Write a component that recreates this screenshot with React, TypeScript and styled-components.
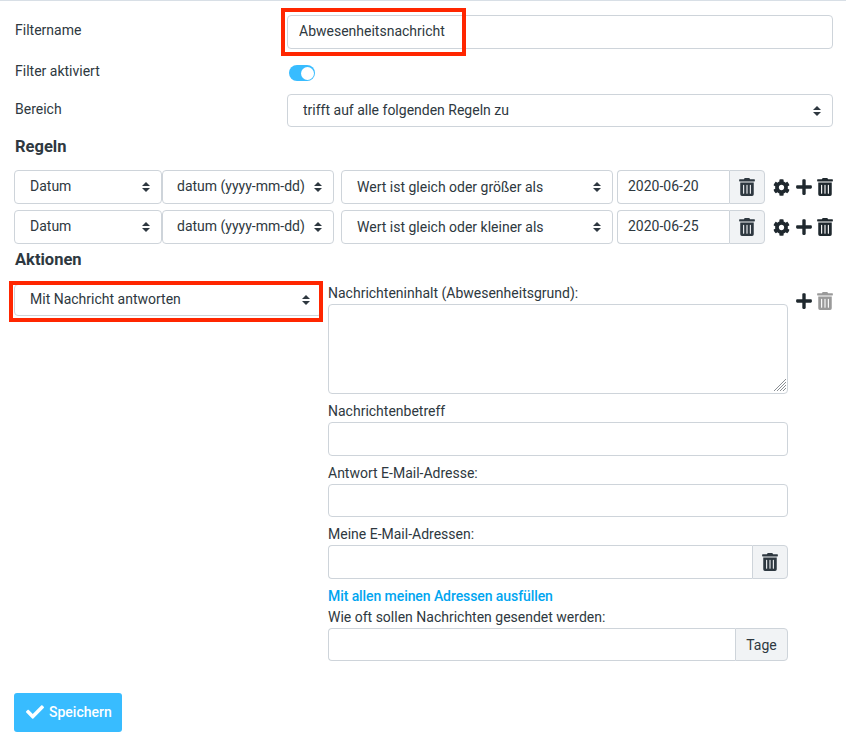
import React from "react";
import styled, { createGlobalStyle } from "styled-components";
import { FaCheck, FaCog, FaPlus, FaTrashAlt } from "react-icons/fa";

const GlobalStyle = createGlobalStyle`
  html, body {
    margin: 0;
    background: #fff;
  }
  * {
    box-sizing: border-box;
  }
`;

const Page = styled.div`
  width: 846px;
  height: 742px;
  border-top: 1px solid #d8dfe6;
  padding: 14px 13px 0 14px;
  font-family: Roboto, "Liberation Sans", sans-serif;
  font-size: 14px;
  color: #2e3840;
`;

const FormRow = styled.div<{ $height: number }>`
  display: grid;
  grid-template-columns: 273px 1fr;
  height: ${(p) => p.$height}px;
`;

const RowLabel = styled.div<{ $top?: number }>`
  padding: ${(p) => p.$top ?? 7}px 0 0 1px;
  line-height: 17px;
`;

const Field = styled.div`
  position: relative;
`;

const Highlight = styled.div<{ $left: number; $top: number; $width: number; $height: number }>`
  position: absolute;
  left: ${(p) => p.$left}px;
  top: ${(p) => p.$top}px;
  width: ${(p) => p.$width}px;
  height: ${(p) => p.$height}px;
  border: 4px solid #ff2600;
  pointer-events: none;
`;

const Input = styled.input<{ $height?: number; $pad?: number }>`
  display: block;
  width: 100%;
  min-width: 0;
  height: ${(p) => p.$height ?? 34}px;
  border: 1px solid #ced4da;
  border-radius: 4px;
  padding: 0 ${(p) => p.$pad ?? 11}px 2px;
  font: inherit;
  color: inherit;
  background: #fff;
  outline: none;
`;

const SelectBox = styled.div<{ $width?: number; $height?: number; $gap?: number }>`
  position: relative;
  flex: none;
  width: ${(p) => (p.$width ? `${p.$width}px` : "100%")};
  height: ${(p) => p.$height ?? 34}px;
  margin-left: ${(p) => p.$gap ?? 0}px;
`;

const NativeSelect = styled.select<{ $pad?: number; $low?: boolean }>`
  display: block;
  width: 100%;
  height: 100%;
  appearance: none;
  border: 1px solid #ced4da;
  border-radius: 4px;
  padding: 0 24px ${(p) => (p.$low ? 0 : 2)}px ${(p) => p.$pad ?? 15}px;
  font: inherit;
  color: inherit;
  background: #fff;
  outline: none;
`;

const Arrows = styled.svg`
  position: absolute;
  right: 12px;
  top: 50%;
  width: 8px;
  height: 10px;
  margin-top: -5px;
  pointer-events: none;
`;

const Toggle = styled.div`
  position: relative;
  width: 26px;
  height: 16px;
  margin: 3px 0 0 2px;
  border-radius: 8px;
  background: #38bcff;
`;

const Knob = styled.span`
  position: absolute;
  right: 1px;
  top: 1.5px;
  width: 13px;
  height: 13px;
  border-radius: 50%;
  background: #fff;
`;

const Heading = styled.h3`
  margin: 0;
  padding-left: 1px;
  font-size: 16.5px;
  font-weight: 700;
  line-height: 20px;
`;

const RulesHeading = styled(Heading)`
  margin: 10px 0 13px;
`;

const ActionsHeading = styled(Heading)`
  margin: 5px 0 14px;
`;

const RuleRow = styled.div`
  display: flex;
  align-items: center;
  height: 34px;
  margin-bottom: 6px;
`;

const Group = styled.div<{ $width?: number; $gap?: number }>`
  display: flex;
  flex: none;
  width: ${(p) => (p.$width ? `${p.$width}px` : "100%")};
  margin-left: ${(p) => p.$gap ?? 0}px;
  ${Input} {
    flex: 1;
    border-radius: 4px 0 0 4px;
    border-right: 0;
  }
`;

const Addon = styled.div<{ $width: number; $height?: number }>`
  display: flex;
  flex: none;
  align-items: center;
  justify-content: center;
  width: ${(p) => p.$width}px;
  height: ${(p) => p.$height ?? 34}px;
  border: 1px solid #ced4da;
  border-radius: 0 4px 4px 0;
  background: #f1f3f5;
  font-size: 14px;
`;

const RuleIcons = styled.div`
  display: flex;
  align-items: center;
  gap: 3px;
  margin-left: 8px;
  color: #1f282e;
`;

const IconSlot = styled.span<{ $muted?: boolean; $wide?: boolean }>`
  display: flex;
  font-size: 18px;
  margin-right: ${(p) => (p.$wide ? 2 : 0)}px;
  color: ${(p) => (p.$muted ? "#9a9a9a" : "inherit")};
`;

const Actions = styled.div`
  display: grid;
  grid-template-columns: 314px 460px 1fr;
  align-items: start;
`;

const ActionSelect = styled.div`
  position: relative;
  width: 308px;
`;

const Column = styled.div`
  display: flex;
  flex-direction: column;
  margin-top: 1px;
`;

const FieldLabel = styled.label`
  display: block;
  line-height: 17px;
  margin-bottom: 2px;
`;

const TextBox = styled.div`
  position: relative;
  margin-bottom: 9px;
`;

const TextArea = styled.textarea`
  display: block;
  width: 100%;
  height: 90px;
  border: 1px solid #ced4da;
  border-radius: 4px;
  background: #fff;
  outline: none;
  resize: none;
`;

const Grip = styled.svg`
  position: absolute;
  right: 1px;
  bottom: 2px;
  width: 14px;
  height: 14px;
`;

const Spaced = styled.div`
  margin-bottom: 9px;
`;

const FillLink = styled.a`
  display: block;
  margin-top: 9px;
  margin-bottom: 4px;
  line-height: 17px;
  font-weight: 500;
  letter-spacing: -0.08px;
  color: #00a5f0;
`;

const ActionIcons = styled(RuleIcons)`
  margin-top: 8px;
  margin-left: 7px;
`;

const SaveButton = styled.button`
  display: flex;
  align-items: center;
  gap: 5px;
  width: 108px;
  height: 39px;
  margin-top: 32px;
  padding: 0 0 2px 12px;
  border: 0;
  border-radius: 3px;
  background: #38bcff;
  color: #fff;
  font: inherit;
  font-weight: 500;
`;

const UpDown = () => (
  <Arrows viewBox="0 0 8 10">
    <path d="M4 0 8 4H0zM4 10 0 6h8z" fill="#2e3840" />
  </Arrows>
);

type SelectProps = {
  value: string;
  width?: number;
  height?: number;
  gap?: number;
  pad?: number;
  low?: boolean;
};

const Select = ({ value, width, height, gap, pad, low }: SelectProps) => (
  <SelectBox $width={width} $height={height} $gap={gap}>
    <NativeSelect defaultValue={value} $pad={pad} $low={low}>
      <option>{value}</option>
    </NativeSelect>
    <UpDown />
  </SelectBox>
);

const Rule = ({ compare, date }: { compare: string; date: string }) => (
  <RuleRow>
    <Select value="Datum" width={148} />
    <Select value="datum (yyyy-mm-dd)" width={172} pad={14} />
    <Select value={compare} width={272} gap={7} low />
    <Group $width={148} $gap={4}>
      <Input defaultValue={date} $pad={10} />
      <Addon $width={36}>
        <FaTrashAlt size={18} />
      </Addon>
    </Group>
    <RuleIcons>
      <IconSlot $wide><FaCog size={17} /></IconSlot>
      <IconSlot><FaPlus /></IconSlot>
      <IconSlot><FaTrashAlt /></IconSlot>
    </RuleIcons>
  </RuleRow>
);

export default function App() {
  return (
    <>
      <GlobalStyle />
      <Page>
        <FormRow $height={47}>
          <RowLabel>Filtername</RowLabel>
          <Field>
            <Input defaultValue="Abwesenheitsnachricht" />
            <Highlight $left={-6} $top={-7} $width={185} $height={48} />
          </Field>
        </FormRow>
        <FormRow $height={32}>
          <RowLabel $top={1}>Filter aktiviert</RowLabel>
          <Toggle>
            <Knob />
          </Toggle>
        </FormRow>
        <FormRow $height={33}>
          <RowLabel>Bereich</RowLabel>
          <Select value="trifft auf alle folgenden Regeln zu" height={33} />
        </FormRow>
        <RulesHeading>Regeln</RulesHeading>
        <Rule compare="Wert ist gleich oder größer als" date="2020-06-20" />
        <Rule compare="Wert ist gleich oder kleiner als" date="2020-06-25" />
        <ActionsHeading>Aktionen</ActionsHeading>
        <Actions>
          <ActionSelect>
            <Select value="Mit Nachricht antworten" height={32} />
            <Highlight $left={-5} $top={-3} $width={314} $height={41} />
          </ActionSelect>
          <Column>
            <FieldLabel>Nachrichteninhalt (Abwesenheitsgrund):</FieldLabel>
            <TextBox>
              <TextArea />
              <Grip viewBox="0 0 14 14">
                <path
                  d="M1 13 13 1M4 13 13 4M7 13l6-6M10 13l3-3"
                  stroke="#8a8f94"
                  strokeWidth="1"
                  fill="none"
                />
              </Grip>
            </TextBox>
            <FieldLabel>Nachrichtenbetreff</FieldLabel>
            <Spaced>
              <Input />
            </Spaced>
            <FieldLabel>Antwort E-Mail-Adresse:</FieldLabel>
            <Spaced>
              <Input $height={33} />
            </Spaced>
            <FieldLabel>Meine E-Mail-Adressen:</FieldLabel>
            <Group>
              <Input />
              <Addon $width={36}>
                <FaTrashAlt size={18} />
              </Addon>
            </Group>
            <FillLink>Mit allen meinen Adressen ausfüllen</FillLink>
            <FieldLabel>Wie oft sollen Nachrichten gesendet werden:</FieldLabel>
            <Group>
              <Input $height={33} />
              <Addon $width={53} $height={33}>Tage</Addon>
            </Group>
          </Column>
          <ActionIcons>
            <IconSlot><FaPlus /></IconSlot>
            <IconSlot $muted><FaTrashAlt /></IconSlot>
          </ActionIcons>
        </Actions>
        <SaveButton>
          <FaCheck size={18} />
          Speichern
        </SaveButton>
      </Page>
    </>
  );
}
